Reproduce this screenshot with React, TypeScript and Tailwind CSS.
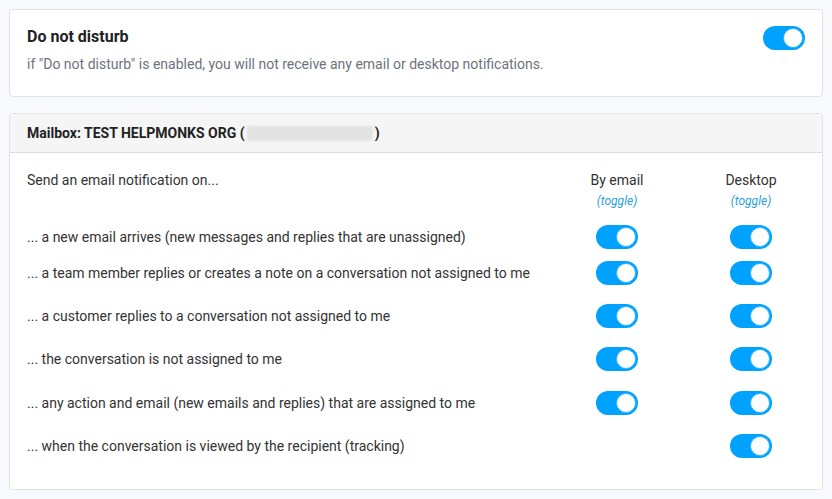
import React from 'react';

function Toggle() {
  return (
    <div className="relative w-[42px] h-6 rounded-full bg-[#00a2ff] shrink-0">
      <div className="absolute right-[2px] top-[2px] w-5 h-5 rounded-full bg-white border border-[#33b5ff]" />
    </div>
  );
}

const rows = [
  { label: '... a new email arrives (new messages and replies that are unassigned)', email: true, mt: 'mt-0' },
  { label: '... a team member replies or creates a note on a conversation not assigned to me', email: true, mt: 'mt-[12px]' },
  { label: '... a customer replies to a conversation not assigned to me', email: true, mt: 'mt-[19px]' },
  { label: '... the conversation is not assigned to me', email: true, mt: 'mt-[19px]' },
  { label: '... any action and email (new emails and replies) that are assigned to me', email: true, mt: 'mt-[20px]' },
  { label: '... when the conversation is viewed by the recipient (tracking)', email: false, mt: 'mt-[19px]' },
];

export default function App() {
  return (
    <div className="w-[832px] h-[499px] bg-[#f8f9fc] px-[9px] pt-[9px] font-['Roboto',sans-serif] text-[#333]">
      {/* Do not disturb */}
      <div className="h-[88px] bg-white border border-[#e3e3e3] rounded-[4px] flex items-start justify-between pl-[17px] pr-[17px] pt-[15px]">
        <div>
          <h2 className="text-[16px] leading-6 font-bold text-[#222]">Do not disturb</h2>
          <p className="mt-[5px] text-[14px] leading-5 text-[#6c737d]">
            if "Do not disturb" is enabled, you will not receive any email or desktop notifications.
          </p>
        </div>
        <div className="mt-[1px]">
          <Toggle />
        </div>
      </div>

      {/* Mailbox */}
      <div className="mt-4 h-[377px] bg-white border border-[#e3e3e3] rounded-[4px] overflow-hidden">
        <div className="h-[39px] bg-[#f5f5f5] border-b border-[#dcdcdc] flex items-center pl-[17px]">
          <span className="text-[14px] font-bold text-[#222]">Mailbox: TEST HELPMONKS ORG (</span>
          <span className="inline-block w-[126px] h-[15px] bg-[#e2e2e2] rounded-[3px] blur-[1px] mx-[2px]" />
          <span className="text-[14px] font-bold text-[#222]">)</span>
        </div>

        <div className="pl-[17px] pr-[4px] pt-[17px]">
          <div className="flex items-start">
            <div className="flex-1 text-[14px] leading-5">Send an email notification on...</div>
            <div className="w-[134px] flex flex-col items-center">
              <span className="text-[14px] leading-5">By email</span>
              <span className="mt-[3px] text-[12px] leading-4 italic text-[#2b9fd9]">(toggle)</span>
            </div>
            <div className="w-[134px] flex flex-col items-center">
              <span className="text-[14px] leading-5">Desktop</span>
              <span className="mt-[3px] text-[12px] leading-4 italic text-[#2b9fd9]">(toggle)</span>
            </div>
          </div>

          <div className="mt-4">
            {rows.map((r) => (
              <div key={r.label} className={`flex items-center h-6 ${r.mt}`}>
                <div className="flex-1 text-[14px] leading-5">{r.label}</div>
                <div className="w-[134px] flex justify-center">{r.email && <Toggle />}</div>
                <div className="w-[134px] flex justify-center">
                  <Toggle />
                </div>
              </div>
            ))}
          </div>
        </div>
      </div>
    </div>
  );
}
